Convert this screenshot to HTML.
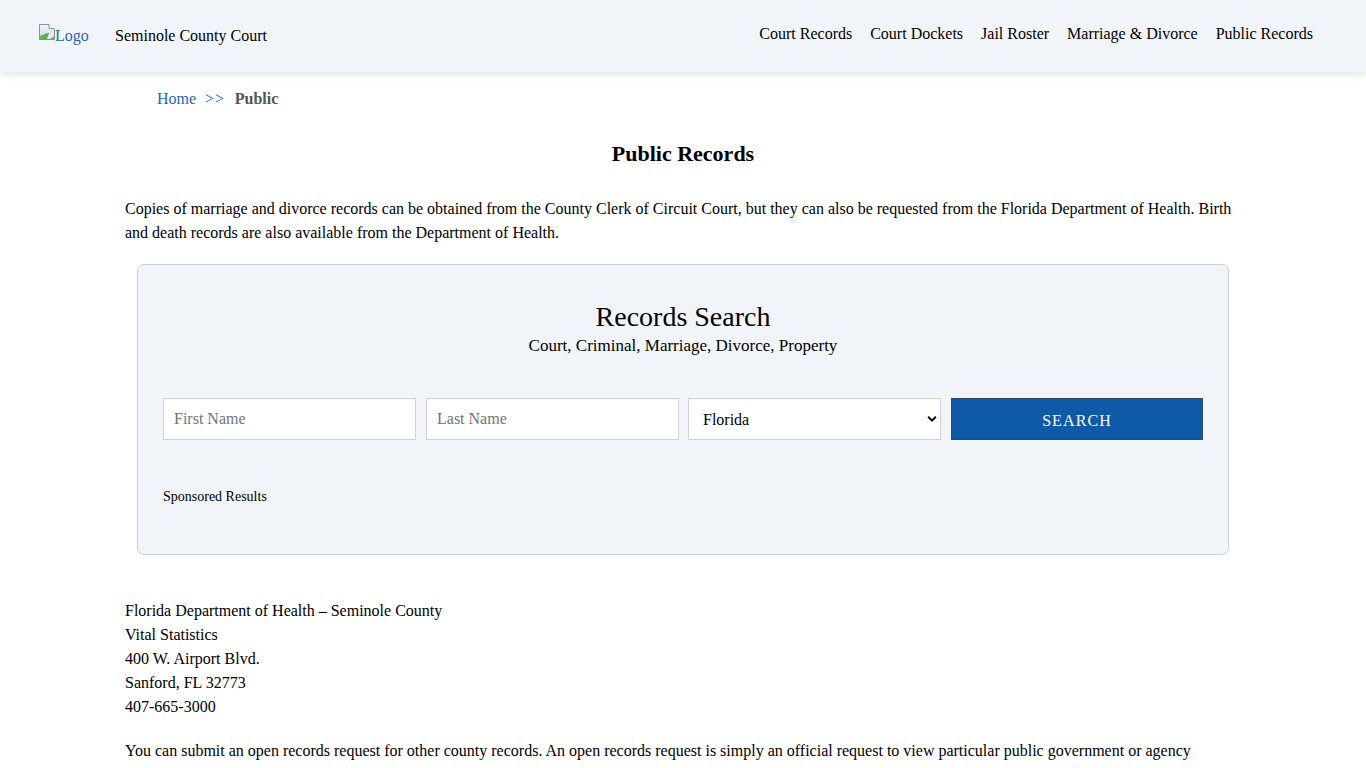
<!DOCTYPE html>
<html>
<head>
<meta charset="utf-8">
<title>Public Records - Seminole County Court</title>
<style>
*{box-sizing:border-box;}
html,body{margin:0;padding:0;}
body{font-family:"Liberation Serif",serif;font-size:16px;line-height:1.5;color:#000;background:#fff;overflow:hidden;width:1366px;height:768px;}
a{text-decoration:none;}
.header{position:relative;height:72px;background:#f1f5f9;box-shadow:0 2px 8px rgba(0,0,0,0.12);z-index:2;}
.logo{position:absolute;left:39px;top:24px;height:22px;color:#1a5dbf;font-size:16px;line-height:22px;white-space:nowrap;}
.logo span{position:absolute;left:16px;top:1px;color:#2863c0;}
.logo .bi{display:inline-block;width:16px;height:16px;vertical-align:top;margin-top:0px;}
.brand{position:absolute;left:115px;top:24px;font-size:16px;line-height:24px;color:#000;}
.nav{position:absolute;right:53px;top:22px;font-size:16px;line-height:24px;white-space:nowrap;}
.nav a{color:#000;margin-left:18px;}
.crumb{position:absolute;left:157px;top:87px;font-size:16px;line-height:24px;color:#555;}
.crumb a{color:#2863c0;}
.crumb .sep{color:#2863c0;margin:0 10px 0 9px;letter-spacing:0.8px;}
.crumb b{color:#555;}
h1{position:absolute;left:0;width:1366px;top:140px;margin:0;text-align:center;font-size:22px;line-height:28px;font-weight:bold;}
.intro{position:absolute;left:125px;width:1116px;top:197px;margin:0;line-height:24px;}
.box{position:absolute;left:137px;top:264px;width:1092px;height:291px;background:#f1f5f9;border:1px solid #cdd1d4;border-radius:7px;}
.box h2{position:absolute;left:0;right:0;top:296px;margin:0;text-align:center;font-weight:normal;font-size:28px;line-height:34px;}
.sub{position:absolute;left:0;right:0;text-align:center;font-size:16px;line-height:24px;}
.inp{position:absolute;top:398px;height:42px;width:253px;background:#fff;border:1px solid #cfd3d7;font-size:16px;line-height:40px;padding-left:10px;color:#6c757d;}
.btn{position:absolute;top:398px;height:42px;width:252px;background:#0f5aa8;border:1px solid #2d4b6c;color:#fff;font-size:16px;line-height:44px;text-align:center;letter-spacing:1.1px;}
.spons{position:absolute;left:163px;top:487px;font-size:14px;line-height:20px;}
.addr{position:absolute;left:125px;top:599px;line-height:24px;}
.last{position:absolute;left:125px;top:739px;line-height:24px;width:1116px;margin:0;}
</style>
</head>
<body>
<div class="header">
  <a class="logo" href="#"><svg class="bi" viewBox="0 0 16 16" width="16" height="16"><defs><linearGradient id="sky" x1="0" y1="0" x2="0" y2="1"><stop offset="0" stop-color="#f2f5f9"/><stop offset="0.5" stop-color="#dfe6ee"/><stop offset="1" stop-color="#c4dde3"/></linearGradient><linearGradient id="gr" x1="0" y1="0" x2="1" y2="1"><stop offset="0" stop-color="#8cc47a"/><stop offset="1" stop-color="#3f9a2c"/></linearGradient></defs><path d="M0.5 0.5H10L15.5 6V15.5H0.5Z" fill="url(#sky)"/><path d="M0.5 15.5V12.5C3 10.8 6 9.4 10.2 8.8L7.6 15.5Z" fill="url(#gr)"/><path d="M7.4 15.8L15.6 8.4" stroke="#f2fbe9" stroke-width="1.5"/><path d="M10.4 15.5L15.5 12.2V15.5Z" fill="#8d9384"/><path d="M0.5 0.5H10L15.5 6V15.5H0.5Z" fill="none" stroke="#8b8f92"/><path d="M10 0.5V4.5H15.5" fill="#fafbfc" stroke="#94989b"/></svg><span>Logo</span></a>
  <div class="brand">Seminole County Court</div>
  <div class="nav"><a href="#">Court Records</a><a href="#">Court Dockets</a><a href="#">Jail Roster</a><a href="#">Marriage &amp; Divorce</a><a href="#">Public Records</a></div>
</div>
<div class="crumb"><a href="#">Home</a><span class="sep">&gt;&gt;</span><b>Public</b></div>
<h1>Public Records</h1>
<p class="intro">Copies of marriage and divorce records can be obtained from the County Clerk of Circuit Court, but they can also be requested from the Florida Department of Health. Birth and death records are also available from the Department of Health.</p>
<div class="box"></div>
<div class="sub" style="top:300px;font-size:28px;line-height:34px;">Records Search</div>
<div class="sub" style="top:334px;font-size:17px;">Court, Criminal, Marriage, Divorce, Property</div>
<div class="inp" style="left:163px;">First Name</div>
<div class="inp" style="left:426px;">Last Name</div>
<div class="inp" style="left:688px;color:#000;padding-left:14px;line-height:42px;">Florida<svg style="position:absolute;left:238px;top:16px;" width="10" height="8" viewBox="0 0 10 8"><path d="M1.2 1.8L5 5.6L8.8 1.8" fill="none" stroke="#000" stroke-width="2"/></svg></div>
<div class="btn" style="left:951px;">SEARCH</div>
<div class="spons">Sponsored Results</div>
<div class="addr">Florida Department of Health &ndash; Seminole County<br>Vital Statistics<br>400 W. Airport Blvd.<br>Sanford, FL 32773<br>407-665-3000</div>
<p class="last">You can submit an open records request for other county records. An open records request is simply an official request to view particular public government or agency</p>
</body>
</html>
